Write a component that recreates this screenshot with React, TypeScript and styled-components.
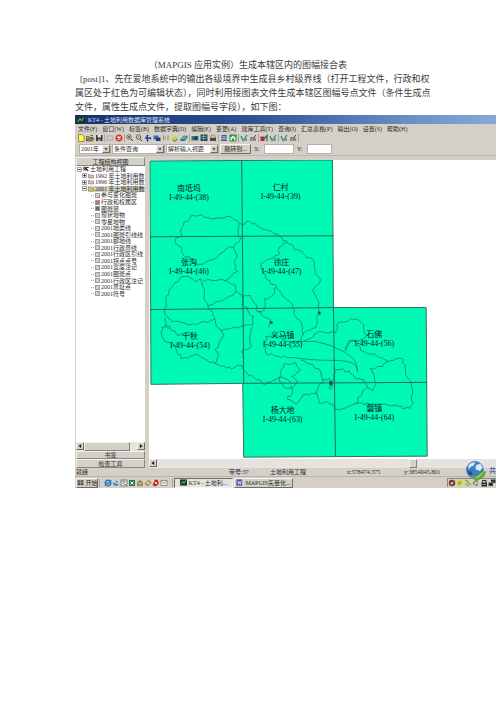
import React from "react";
import styled, { createGlobalStyle } from "styled-components";

const Global = createGlobalStyle`
  * { box-sizing: border-box; }
  body { margin: 0; background: #fff; }
  button, input, select { font: inherit; color: inherit; margin: 0; }
`;

const UI_FONT = `"Liberation Serif", "Noto Sans CJK SC", sans-serif`;
const FACE = "#d4d0c8";

const Page = styled.main`
  padding-top: 58px;
`;

const Article = styled.article`
  margin: 0 75px;
  font: 9px/14px "Liberation Serif", "Noto Sans CJK SC", serif;
  color: #3c3c3c;
  white-space: nowrap;
`;

const Heading = styled.h1`
  margin: 0;
  font: inherit;
  text-align: center;
`;

const Line = styled.p<{ $indent?: boolean }>`
  margin: 0;
  padding-left: ${(p) => (p.$indent ? "5px" : "0")};
`;

const AppWindow = styled.section`
  position: relative;
  margin: 1px 0 0 75px;
  overflow: hidden;
  background: ${FACE};
  color: #2c2c2c;
  font: 6px/8px ${UI_FONT};
  white-space: nowrap;
`;

const TitleBar = styled.header`
  display: flex;
  align-items: center;
  gap: 3px;
  height: 9px;
  padding-left: 2px;
  color: #dfe6f5;
  background: linear-gradient(90deg, #173070 0%, #2c4f93 40%, #6b90c6 80%, #86a9d8 100%);
`;

const MenuBar = styled.nav`
  display: flex;
  align-items: center;
  gap: 5px;
  height: 9px;
  padding-left: 3px;
`;

const FlatButton = styled.button`
  display: flex;
  padding: 0;
  border: 0;
  background: none;
`;

const ToolBar = styled.div`
  display: flex;
  align-items: center;
  gap: 1px;
  height: 10px;
  padding-left: 2px;
`;

const Divider = styled.span`
  width: 1px;
  height: 8px;
  background: #aaa69e;
  flex: none;
`;

const QueryBar = styled.form`
  display: flex;
  align-items: center;
  gap: 1px;
  height: 13px;
  padding-left: 4px;
  border-bottom: 1px solid #bcb8b0;
`;

const Combo = styled.label<{ $w: number }>`
  display: flex;
  align-items: center;
  width: ${(p) => p.$w}px;
  height: 10px;
  background: #fff;
  border: 1px solid #b4b0a8;
`;

const Select = styled.select`
  flex: 1;
  min-width: 0;
  height: 8px;
  padding: 0 1px;
  border: 0;
  background: transparent;
  appearance: none;
  line-height: 8px;
`;

const Field = styled.label<{ $gap: number }>`
  display: flex;
  align-items: center;
  gap: ${(p) => p.$gap}px;
  margin-left: 2px;
`;

const TextBox = styled.input<{ $w: number }>`
  width: ${(p) => p.$w}px;
  height: 10px;
  padding: 0 1px;
  border: 1px solid #b4b0a8;
  background: #fff;
`;

const Raised = styled.button<{ $w?: number; $pressed?: boolean }>`
  display: flex;
  align-items: center;
  justify-content: center;
  gap: 2px;
  width: ${(p) => (p.$w ? `${p.$w}px` : "auto")};
  height: 10px;
  padding: 0;
  overflow: hidden;
  background: ${(p) => (p.$pressed ? "#e6e3de" : FACE)};
  border: 1px solid;
  border-color: ${(p) => (p.$pressed ? "#706c66 #f6f4f0 #f6f4f0 #706c66" : "#f6f4f0 #706c66 #706c66 #f6f4f0")};
  flex: none;
`;

const Arrow = styled(Raised)`
  height: 8px;
`;

const Workspace = styled.div`
  display: grid;
  grid-template-columns: 69px minmax(0, 1fr);
  gap: 4px;
  padding-left: 1px;
`;

const SidePanel = styled.aside`
  display: flex;
  flex-direction: column;
  height: 311px;
  margin-top: 1px;
  background: #fff;
  overflow: hidden;
`;

const PanelTab = styled.button<{ $h: number }>`
  height: ${(p) => p.$h}px;
  padding: 0;
  border: 1px solid;
  border-color: #f2f0ec #8a867f #8a867f #f2f0ec;
  background: ${FACE};
  line-height: 6px;
  flex: none;
`;

const Tree = styled.ul`
  display: flex;
  flex-direction: column;
  height: 131px;
  margin: 0 0 auto;
  padding: 0;
  list-style: none;
`;

const TreeItem = styled.li<{ $level: number }>`
  display: flex;
  align-items: center;
  gap: 1px;
  flex: 1;
  min-height: 0;
  padding-left: ${(p) => [1, 6, 15][p.$level]}px;
  line-height: 6px;
`;

const TreeLabel = styled.label<{ $selected?: boolean }>`
  display: flex;
  align-items: center;
  gap: 1px;
  background: ${(p) => (p.$selected ? FACE : "transparent")};
`;

const Expander = styled.button`
  display: grid;
  place-items: center;
  width: 5px;
  height: 5px;
  padding: 0;
  border: 1px solid #a8a8a8;
  background: #fff;
  flex: none;
`;

const Twig = styled.span`
  width: 3px;
  border-top: 1px dotted #aaa;
  flex: none;
`;

const Tick = styled.input<{ $tone?: string }>`
  appearance: none;
  width: 5px;
  height: 5px;
  border: 1px solid #9b9b9b;
  background: ${(p) => p.$tone || "#d0d0d0"};
  flex: none;
`;

const ScrollRow = styled.div`
  display: flex;
  justify-content: space-between;
  height: 9px;
  background: #e6e3de;
  flex: none;
`;

const Thumb = styled.span<{ $w: number; $left?: number }>`
  width: ${(p) => p.$w}px;
  margin-right: auto;
  margin-left: ${(p) => p.$left || 0}px;
  background: ${FACE};
  border: 1px solid;
  border-color: #f6f4f0 #85817a #85817a #f6f4f0;
`;

const MapPane = styled.section`
  display: flex;
  flex-direction: column;
  padding-top: 4px;
  min-width: 0;
`;

const MapSvg = styled.svg`
  display: block;
  width: 100%;
  height: 299px;
  background: #fff;
`;

const StatusBar = styled.footer`
  display: grid;
  grid-template-columns: 153px 41px 77px 57px 1fr;
  height: 9px;
  padding-left: 1px;
  border-bottom: 1px solid #b8b4ac;
`;

const TaskBar = styled.footer`
  display: flex;
  align-items: center;
  gap: 1px;
  height: 11px;
  padding-left: 1px;
`;

const Quick = styled.div`
  display: flex;
  padding: 0 3px;
`;

const Tray = styled.div`
  display: flex;
  margin-left: auto;
  border-left: 1px solid #8a867f;
  border-top: 1px solid #8a867f;
`;

const Badge = styled.div`
  position: absolute;
  right: 0;
  bottom: 6px;
  display: flex;
  align-items: center;
  gap: 2px;
  color: #23309a;
  font-size: 7px;
`;

const Glyph = styled.svg<{ $s?: number }>`
  display: block;
  width: ${(p) => p.$s || 8}px;
  height: ${(p) => p.$s || 8}px;
  flex: none;
`;

const shapes: Record<string, React.ReactNode> = {
  app: <><rect x="0" y="1" width="16" height="14" fill="#123a22" /><path d="M2 12L6 5l3 5 4-7" stroke="#5fd07a" strokeWidth="2" fill="none" /></>,
  fresh: <path d="M3 1h7l4 4v10H3z" fill="#fffb50" stroke="#75702a" strokeWidth="1.5" />,
  open: <><path d="M1 14V5h5l2 2h5v3" fill="#d6cf6a" stroke="#4b4930" strokeWidth="1.5" /><path d="M1 14l3-6h12l-3 6z" fill="#8f8b52" stroke="#33331f" /><path d="M9 3q3-2 5 1" stroke="#222" fill="none" strokeWidth="1.5" /></>,
  save: <><rect x="2" y="2" width="13" height="12" fill="#383838" /><rect x="5" y="2" width="7" height="5" fill="#ddd" /><rect x="6" y="10" width="5" height="4" fill="#999" /></>,
  box: <rect x="2" y="4" width="12" height="8" fill="none" stroke="#a19d96" strokeWidth="1.5" />,
  stop: <><circle cx="8" cy="8" r="7" fill="#cc3b38" /><path d="M5 5l6 6M11 5l-6 6" stroke="#fff" strokeWidth="2.4" /></>,
  zoomIn: <><circle cx="6" cy="6" r="4.5" fill="#e4eef0" stroke="#444" strokeWidth="1.6" /><path d="M10 10l4 4M4 6h4M6 4v4" stroke="#333" strokeWidth="1.8" /></>,
  zoomOut: <><circle cx="7" cy="6" r="4.5" fill="#e4eef0" stroke="#444" strokeWidth="1.6" /><path d="M10 10l4 4M5 6h4" stroke="#333" strokeWidth="1.8" /></>,
  pan: <path d="M7 1l3 3H8v3h4V5l3 4-3 3v-2H8v3h2l-3 3-2-3V9H1l3-4h2V4H4z" fill="#28349b" />,
  fit: <><rect x="1" y="3" width="10" height="8" fill="#4268b8" /><rect x="6" y="7" width="9" height="7" fill="#243b83" /></>,
  ratio: <path d="M3 3v9M12 3v9M7 5v2M7 9v2" stroke="#8d8448" strokeWidth="2" />,
  hand: <><path d="M2 8l7-5 5 5-6 6z" fill="#d6cc35" /><path d="M3 11l5 4 5-5" stroke="#555" fill="none" strokeWidth="2" /></>,
  eraser: <><path d="M1 11l6-7h8l-6 7z" fill="#49b8c8" stroke="#28566f" /><path d="M1 11h8l6-7v3l-6 7H1z" fill="#34658c" /></>,
  flag: <><rect x="1" y="4" width="14" height="9" fill="#2d7c84" /><path d="M5 8l7-4v8z" fill="#1d2c55" /></>,
  table: <><rect x="1" y="1" width="14" height="13" fill="#274e56" /><path d="M3 5h10M3 9h10M7 2v11" stroke="#8fc5ae" strokeWidth="1.3" /></>,
  print: <><rect x="2" y="7" width="12" height="7" fill="#4d4940" /><path d="M4 7V2h7l2 5" fill="#d9d199" stroke="#555" /></>,
  disk: <><path d="M3 2h10v7H3zM2 11h12v3H2z" fill="#36549a" /><path d="M5 4h6v3H5z" fill="#a2b4d8" /></>,
  home: <><rect x="1" y="1" width="14" height="14" fill="#28944a" /><path d="M3 13V7l5-4 5 4v6h-3V9H6v4z" fill="#d8f3d8" /></>,
  editG: <><path d="M2 4l4 9 8-11" stroke="#228f78" fill="none" strokeWidth="2.5" /><rect x="8" y="8" width="6" height="6" fill="#83968e" /></>,
  editN: <><path d="M2 6h5v8H2zM8 7h6v7H8z" fill="#7f8d87" /><path d="M7 9l7-7" stroke="#43534d" strokeWidth="2" /></>,
  editR: <><rect x="1" y="5" width="8" height="9" fill="#bd2830" /><path d="M8 10l6-7v11" stroke="#406a52" fill="none" strokeWidth="2.5" /></>,
  ie: <><circle cx="8" cy="8" r="5.5" fill="none" stroke="#2a79bd" strokeWidth="2.8" /><path d="M3 8h10M1 13Q12 7 15 2" stroke="#2a79bd" strokeWidth="2" fill="none" /></>,
  bird: <><path d="M1 7l5 1 4-6 2 6 3 2-6 4-5-1z" fill="#438dbb" /><path d="M7 8l6 1" stroke="#d7f0ff" strokeWidth="2" /></>,
  sheet: <><rect x="2" y="2" width="12" height="12" fill="#e2e6e3" stroke="#596767" strokeWidth="1.5" /><path d="M5 10l6-6M5 5h3M8 11h4" stroke="#596767" strokeWidth="1.5" /></>,
  green: <><rect x="2" y="2" width="12" height="12" fill="#247a50" /><path d="M5 5l6 6M11 5l-6 6" stroke="#fff" strokeWidth="2" /></>,
  pack: <><path d="M2 6l6-4 6 4v7l-6 2-6-2z" fill="#8b8045" /><path d="M3 7l5 2 5-2M8 9v5" stroke="#f3e49a" strokeWidth="1.5" fill="none" /></>,
  gold: <><path d="M2 9l7-6 5 4-7 7z" fill="#c2a33a" stroke="#5f5126" /><circle cx="8" cy="8" r="2" fill="#fff3ad" /></>,
  red: <><path d="M8 1q5 0 4 4 3 2 0 6-4 5-8 3-5-3 0-7 0-5 4-6z" fill="#c12925" /><circle cx="8" cy="8" r="2" fill="#fff" /></>,
  mail: <><rect x="2" y="3" width="12" height="10" fill="#ece9df" stroke="#77736b" strokeWidth="1.3" /><path d="M3 4l5 5 5-5" stroke="#77736b" fill="none" strokeWidth="1.3" /></>,
  win: <path d="M1 3h6v5H1zM8 3h7v5H8zM1 9h6v5H1zM8 9h7v5H8z" fill="#555" />,
  word: <><rect x="1" y="1" width="13" height="14" fill="#4b4ca8" /><path d="M4 4l2 8 2-6 2 6 2-8" stroke="#fff" fill="none" strokeWidth="1.6" /></>,
  shield: <><circle cx="8" cy="8" r="6.5" fill="#75392f" /><path d="M4 8l8-3-4 7z" fill="#dec8b3" /></>,
  sun: <><circle cx="8" cy="8" r="6" fill="#d5d72c" /><path d="M5 11l6-6M5 5l2 6" stroke="#657025" strokeWidth="1.5" /></>,
  leaf: <path d="M2 3q6 0 7 5 3 0 5 5M3 9l6 5" fill="none" stroke="#7ebb34" strokeWidth="3" />,
  sound: <path d="M3 6h3l4-4v12l-4-4H3z" fill="#eee" stroke="#3d5132" strokeWidth="1.5" />,
  lock: <><rect x="3" y="7" width="11" height="8" fill="#292929" /><path d="M5 7V3h7v4" fill="none" stroke="#292929" strokeWidth="2" /><path d="M5 11h7" stroke="#fff" /></>,
  net: <><rect x="6" y="1" width="9" height="7" fill="#343434" /><rect x="1" y="7" width="9" height="7" fill="#222" stroke="#aaa" /></>,
  folder: <path d="M1 13V4h5l2 2h7v7z" fill="#c9c7bd" stroke="#6d6a60" strokeWidth="1.5" />,
  folderOpen: <path d="M1 13V4h5l2 2h7v7z" fill="#d6d45f" stroke="#6b6936" strokeWidth="1.5" />,
  root: <><rect x="1" y="2" width="9" height="10" fill="#5d5c56" /><path d="M7 6l7 7M10 4h5" stroke="#222" strokeWidth="3" /></>,
  down: <path d="M4 6h8l-4 5z" fill="#222" />,
  left: <path d="M11 3v10L4 8z" fill="#111" />,
  right: <path d="M5 3v10l7-5z" fill="#111" />,
  plus: <path d="M1 8h14M8 1v14" stroke="#333" strokeWidth="5" />,
  minus: <path d="M1 8h14" stroke="#333" strokeWidth="5" />,
};

function Icon({ name, size }: { name: string; size?: number }) {
  return (
    <Glyph viewBox="0 0 16 16" $s={size} aria-hidden="true">
      {shapes[name]}
    </Glyph>
  );
}

const menus = ["文件(F)", "窗口(W)", "标签(B)", "数据字典(D)", "编辑(E)", "变更(A)", "建库工具(T)", "查询(I)", "汇总表格(P)", "输出(O)", "设置(S)", "帮助(H)"];
const tools = ["fresh", "open", "save", "|", "box", "stop", "|", "zoomIn", "zoomOut", "pan", "fit", "ratio", "hand", "eraser", "|", "flag", "table", "print", "|", "disk", "home", "|", "editG", "editN", "|", "editR", "editG", "|", "editG", "editN", "|"];
const quick = ["ie", "bird", "sheet", "green", "pack", "gold", "red", "mail"];
const tray = ["shield", "sun", "leaf", "sound", "lock", "net"];

const years = [
  { text: "1992 年土地利用数", mark: "plus", icon: "folder" },
  { text: "1996 年土地利用数", mark: "plus", icon: "folder" },
  { text: "2001 年土地利用数", mark: "minus", icon: "folderOpen" },
];

const layers = ["参与变化图斑", "行政和权属区", "图斑层", "现状地物", "零星地物", "2001地类线", "2001图斑引线线", "2001邮地线", "2001行政界线", "2001行政区引线", "2001拐点点号", "2001宽度注记", "2001图斑点", "2001行政区注记", "2001界址点", "2001符号"];
const tones: Record<number, string> = { 1: "#d06a5c", 2: "#4a6f94" };

type Pt = [number, number];

/* Survey boundaries: each leg is subdivided and nudged sideways so it reads as a natural edge. */
function rough(points: Pt[], seed: number, amp = 1.5) {
  let s = seed * 7919 + 13;
  const rnd = () => {
    s = (s * 16807) % 2147483647;
    return s / 2147483647 - 0.5;
  };
  let d = `M${points[0][0]} ${points[0][1]}`;
  for (let i = 1; i < points.length; i++) {
    const [ax, ay] = points[i - 1];
    const [bx, by] = points[i];
    const n = Math.max(1, Math.round(Math.hypot(bx - ax, by - ay) / 3));
    for (let k = 1; k <= n; k++) {
      const t = k / n;
      const j = k === n ? 0 : amp * 2;
      d += `L${(ax + (bx - ax) * t + rnd() * j).toFixed(1)} ${(ay + (by - ay) * t + rnd() * j).toFixed(1)}`;
    }
  }
  return d;
}

const borders: Pt[][] = [
  [[183, 256], [181, 249], [174, 240], [181, 236], [180, 230], [183, 222], [189, 219], [190, 216], [200, 215], [210, 219], [220, 218], [230, 217], [237, 221], [243, 225], [248, 221], [256, 226], [267, 231], [279, 236], [287, 243], [297, 250], [305, 256], [314, 263], [314, 272]],
  [[314, 272], [320, 281], [312, 291], [317, 300], [318, 312], [316, 325], [309, 331], [302, 335]],
  [[183, 256], [190, 259], [196, 265], [207, 261], [216, 258], [223, 252], [229, 247], [233, 248], [239, 241], [237, 230], [238, 224]],
  [[233, 248], [236, 255], [234, 264], [237, 272], [229, 278], [224, 281]],
  [[202, 280], [214, 281], [224, 281], [235, 286], [236, 292], [225, 299], [215, 302], [207, 306], [203, 299], [202, 287], [200, 279]],
  [[200, 279], [194, 282], [189, 278], [181, 277], [174, 283], [168, 291], [165, 300], [164, 309], [166, 317], [171, 322], [181, 323], [190, 325], [198, 324], [207, 323], [214, 319], [210, 311], [207, 306]],
  [[214, 319], [216, 327], [220, 331], [223, 336], [219, 342], [214, 350], [218, 356], [214, 364], [207, 361], [201, 358], [195, 355], [187, 359], [180, 359], [176, 352], [173, 345], [166, 343], [161, 337], [161, 328], [169, 328], [175, 334], [183, 336], [191, 334]],
  [[164, 318], [164, 326], [169, 328]],
  [[236, 292], [242, 297], [241, 305], [247, 311], [253, 317], [252, 325], [242, 326], [230, 329], [220, 331]],
  [[242, 297], [250, 296], [254, 304], [257, 312], [265, 318], [271, 323], [268, 328]],
  [[257, 312], [264, 310], [264, 299], [270, 297], [276, 288], [266, 280], [262, 272], [260, 264], [269, 259], [279, 254], [279, 247], [286, 243]],
  [[214, 364], [226, 369], [234, 368], [241, 366], [246, 374], [256, 380], [264, 386], [272, 381]],
  [[242, 358], [242, 350], [251, 347], [249, 337], [252, 327]],
  [[276, 288], [283, 297], [292, 305], [294, 316], [301, 323], [303, 335], [300, 342]],
  [[303, 342], [317, 333], [335, 333], [338, 323], [348, 321], [354, 320], [361, 323], [364, 330], [365, 338], [357, 342], [350, 342], [345, 351], [348, 342], [357, 342]],
  [[265, 337], [265, 354], [278, 357], [292, 358]],
  [[265, 337], [275, 335], [283, 341], [296, 343], [303, 342]],
  [[283, 365], [295, 363], [300, 371], [291, 377], [297, 382], [292, 389], [286, 389], [279, 382], [280, 373], [283, 365]],
  [[300, 361], [312, 365], [320, 372], [323, 381], [316, 392], [309, 396], [302, 396], [296, 405], [287, 400], [292, 394], [290, 386]],
  [[321, 380], [329, 379], [330, 390], [333, 376], [334, 370], [343, 369]],
  [[316, 392], [319, 404], [327, 403], [332, 405], [335, 410], [344, 409], [353, 405], [359, 404], [370, 405], [380, 405], [388, 406], [398, 407], [410, 409], [413, 404], [411, 397], [411, 388], [408, 379], [405, 369], [401, 359], [393, 361], [385, 363]],
  [[343, 370], [350, 374], [355, 379], [364, 381], [367, 388], [373, 391], [375, 383], [374, 376], [370, 369], [382, 367], [387, 361], [377, 357], [367, 354], [360, 351], [357, 344]],
  [[272, 381], [282, 378], [291, 384]],
  [[367, 388], [360, 397], [355, 404]],
];

const sheets: [number, number, string, string][] = [
  [188, 191, "南坻坞", "I-49-44-(38)"],
  [280, 190, "仁村", "I-49-44-(39)"],
  [188, 265, "张沟", "I-49-44-(46)"],
  [281, 265, "徐庄", "I-49-44-(47)"],
  [189, 340, "千秋", "I-49-44-(54)"],
  [282, 339, "义马镇", "I-49-44-(55)"],
  [374, 338, "石佛", "I-49-44-(56)"],
  [282, 414, "杨大地", "I-49-44-(63)"],
  [374, 412, "磐镇", "I-49-44-(64)"],
];

function SheetMap() {
  return (
    <MapSvg viewBox="148 160 348 299" preserveAspectRatio="xMinYMin meet" role="img" aria-label="图幅接合表">
      <path d="M149 161L332 160L333 308L426 308L427 457L243 458L242 384L150 385Z" fill="#00f9b4" stroke="#34705e" strokeWidth="1" />
      <g fill="none" stroke="#226b55" strokeWidth="1">
        <path d="M241 161L243 384M333 308L335 457M149 237L333 236M149 310L333 308M242 384L427 383" />
      </g>
      <g fill="none" stroke="#17745a" strokeWidth="0.7">
        {borders.map((b, i) => (
          <path key={i} d={rough(b, i + 1)} />
        ))}
        <path d="M292 358Q310 361 334 361T357 372Q358 360 343 352T315 342L303 342" />
      </g>
      <path d="M329 382h3v4h-3zM269 322h3v2h-3zM318 312h2v3h-2z" fill="#17453a" />
      <g textAnchor="middle" fill="#06231b" fontFamily={`"Liberation Serif", "Noto Sans CJK SC", serif`}>
        {sheets.map(([x, y, name, code]) => (
          <React.Fragment key={code}>
            <text x={x} y={y} fontSize="8">{name}</text>
            <text x={x} y={y + 9} fontSize="8">{code}</text>
          </React.Fragment>
        ))}
      </g>
    </MapSvg>
  );
}

function ComboBox({ w, value, name }: { w: number; value: string; name: string }) {
  return (
    <Combo $w={w}>
      <Select aria-label={name} defaultValue={value}>
        <option>{value}</option>
      </Select>
      <Arrow as="span" $w={8}>
        <Icon name="down" size={6} />
      </Arrow>
    </Combo>
  );
}

function Scroller({ thumb, left, end }: { thumb: number; left?: number; end?: boolean }) {
  return (
    <ScrollRow>
      <Arrow type="button" $w={8} aria-label="向左滚动"><Icon name="left" size={6} /></Arrow>
      <Thumb $w={thumb} $left={left} />
      {end && <Arrow type="button" $w={8} aria-label="向右滚动"><Icon name="right" size={6} /></Arrow>}
    </ScrollRow>
  );
}

export default function App() {
  return (
    <Page>
      <Global />
      <Article>
        <Heading>（MAPGIS 应用实例）生成本辖区内的图幅接合表</Heading>
        <Line $indent>[post]1、先在爱地系统中的输出各级境界中生成县乡村级界线（打开工程文件，行政和权</Line>
        <Line>属区处于红色为可编辑状态），同时利用接图表文件生成本辖区图幅号点文件（条件生成点</Line>
        <Line>文件，属性生成点文件，提取图幅号字段），如下图：</Line>
      </Article>

      <AppWindow>
        <TitleBar>
          <Icon name="app" />
          KT4 - 土地利用数据库管理系统
        </TitleBar>
        <MenuBar>
          {menus.map((m) => <FlatButton key={m} type="button">{m}</FlatButton>)}
        </MenuBar>
        <ToolBar>
          {tools.map((t, i) =>
            t === "|" ? <Divider key={i} /> : (
              <FlatButton key={i} type="button" aria-label={t}><Icon name={t} /></FlatButton>
            )
          )}
        </ToolBar>
        <QueryBar>
          <ComboBox w={32} value="2001年" name="年度" />
          <ComboBox w={53} value="条件查询" name="查询方式" />
          <ComboBox w={53} value="解析输入视距" name="输入方式" />
          <Raised type="button" $w={31}>跳转到...</Raised>
          <Field $gap={4}>X: <TextBox $w={30} /></Field>
          <Field $gap={5}>Y: <TextBox $w={25} /></Field>
        </QueryBar>

        <Workspace>
          <SidePanel>
            <PanelTab type="button" $h={9}>工程结构视图</PanelTab>
            <Tree>
              <TreeItem $level={0}>
                <Expander type="button" aria-label="折叠"><Icon name="minus" size={3} /></Expander>
                <TreeLabel><Icon name="root" size={6} />土地利用工程</TreeLabel>
              </TreeItem>
              {years.map((y) => (
                <TreeItem key={y.text} $level={1}>
                  <Expander type="button" aria-label="展开"><Icon name={y.mark} size={3} /></Expander>
                  <TreeLabel $selected={y.mark === "minus"}><Icon name={y.icon} size={6} />{y.text}</TreeLabel>
                </TreeItem>
              ))}
              {layers.map((l, i) => (
                <TreeItem key={l} $level={2}>
                  <Twig />
                  <TreeLabel><Tick type="checkbox" defaultChecked={i in tones} $tone={tones[i]} />{l}</TreeLabel>
                </TreeItem>
              ))}
            </Tree>
            <Scroller thumb={46} end />
            <PanelTab type="button" $h={8}>书签</PanelTab>
            <PanelTab type="button" $h={9}>检查工具</PanelTab>
          </SidePanel>
          <MapPane>
            <SheetMap />
            <Scroller thumb={8} left={252} />
          </MapPane>
        </Workspace>

        <StatusBar>
          <span>就绪</span>
          <span>带号:37</span>
          <span>土地利用工程</span>
          <span>x:578474.375</span>
          <span>y:3854045.801</span>
        </StatusBar>
        <TaskBar>
          <Raised type="button" $w={22}><Icon name="win" size={7} />开始</Raised>
          <Divider />
          <Quick>
            {quick.map((q) => <FlatButton key={q} type="button" aria-label={q}><Icon name={q} /></FlatButton>)}
          </Quick>
          <Divider />
          <Raised type="button" $w={59} $pressed><Icon name="app" size={7} />KT4 - 土地利...</Raised>
          <Raised type="button" $w={59}><Icon name="word" size={7} />MAPGIS矢量化...</Raised>
          <Tray>
            {tray.map((t) => <Icon key={t} name={t} />)}
          </Tray>
        </TaskBar>
        <Badge>
          <Glyph viewBox="0 0 40 40" $s={22} aria-hidden="true">
            <circle cx="18" cy="18" r="16" fill="#3a7fc4" />
            <path d="M6 10q6-7 13-6l-3 6-5 2-4 5zM20 9l8-2 4 7-5 6-8-3z" fill="#d9ecf8" />
            <path d="M4 19l8 2 3 9q-9-2-11-11z" fill="#1f4f95" />
            <path d="M18 38q-4-8-9-10 8-1 11 5 3-10 19-13-3 16-21 18z" fill="#6aa832" />
            <path d="M20 32q7-2 12-9" stroke="#d6eda0" strokeWidth="1.5" fill="none" />
          </Glyph>
          共
        </Badge>
      </AppWindow>
    </Page>
  );
}
